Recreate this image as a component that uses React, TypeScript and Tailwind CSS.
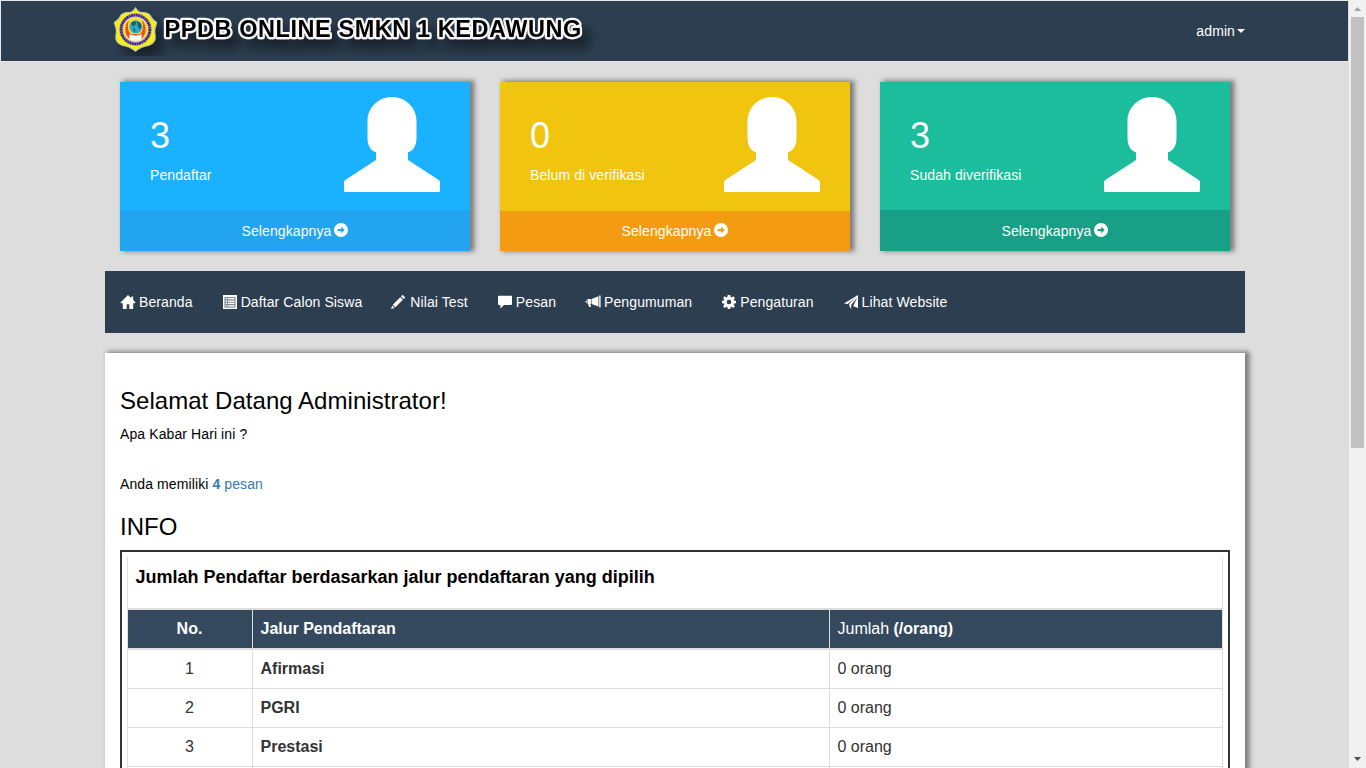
import type { ReactNode } from "react";

function Glyph({ children, className = "" }: { children: ReactNode; className?: string }) {
  return (
    <svg viewBox="0 0 14 14" className={"h-3.5 w-3.5 shrink-0 fill-current " + className}>
      {children}
    </svg>
  );
}

const HomeIcon = (
  <svg viewBox="0 0 16 14" className="-mx-px h-3.5 w-4 shrink-0 fill-current">
    <path d="M8 0 .5 7.4l.4.8h1.900V14h3.900V9.200h2.600V14h3.900V8.200h1.900l.4-.8-2.300-2.300V1.400h-2v1.800z" />
  </svg>
);
const ListIcon = (
  <Glyph>
    <path
      fillRule="evenodd"
      d="M0 0h14v14H0zM1.600 2v10.400h10.800V2zM2.600 3h1.500v1.300H2.600zM5 3h6.500v1.300H5zM2.600 5.400h1.500v1.300H2.600zM5 5.400h6.500v1.300H5zM2.600 7.800h1.500v1.300H2.600zM5 7.800h6.500v1.300H5zM2.600 10.200h1.500v1.300H2.600zM5 10.200h6.500v1.300H5z"
    />
    <path d="M1.600 2h10.800v10.400H1.600z" opacity=".4" />
  </Glyph>
);
const PencilIcon = (
  <Glyph className="-ml-px mr-px">
    <path d="M11.200.3c.3-.3.7-.3 1 0l1.600 1.600c.3.3.3.7 0 1L12.600 4 10 1.500zM9.300 2.200l2.600 2.600-7.500 7.400-2.600-2.500zM1.200 10.400l2.500 2.500L0 14z" />
  </Glyph>
);
const CommentIcon = (
  <Glyph>
    <path d="M.9.7h12.200c.5 0 .9.4.9.9v7.400c0 .5-.4.9-.9.9H6L2.400 13.500V9.900H.9c-.5 0-.9-.4-.9-.9V1.600C0 1.100.4.7.9.7z" />
  </Glyph>
);
const HornIcon = (
  <svg viewBox="0 0 16 14" className="-mx-px h-3.5 w-4 shrink-0 fill-current">
    <path d="M14.200.6h1.400v11.800h-1.400zM13.500 1.300v10.200L6.500 9V4zM2.500 4h3.400v4.800H5.200l.9 3.300H4.100L3 8.800h-.5zM.5 6.200 1.700 5v3.200L.5 7.300z" />
  </svg>
);
const CogIcon = (
  <Glyph>
    <path
      fillRule="evenodd"
      d="M5.700 0h2.600l.3 2 .9.4L11.200 1.200 12.900 2.900 11.700 4.600l.4.9 1.900.3v2.500l-1.900.3-.4.9 1.200 1.700-1.700 1.700-1.700-1.200-.9.4-.3 1.900H5.700l-.3-1.900-.9-.4-1.700 1.200-1.700-1.700 1.200-1.700-.4-.9L0 8.300V5.800l1.900-.3.4-.9L1.100 2.900l1.700-1.700 1.700 1.200.9-.4zM7 4.700a2.300 2.300 0 1 0 0 4.600 2.300 2.300 0 0 0 0-4.600z"
    />
  </Glyph>
);
const SendIcon = (
  <Glyph>
    <path d="M14 0v13L9.200 11.200 13 2.800 7.200 10v4L5.500 11.500 5.200 9 11.800 2.200 3.800 8.900 0 8.500z" />
  </Glyph>
);

function CircleArrow() {
  return (
    <Glyph className="-mt-0.5 -ml-px">
      <path
        fillRule="evenodd"
        d="M7 0a7 7 0 1 1 0 14A7 7 0 0 1 7 0zM7.200 3.800v2.100H3.600v2.200h3.600v2.100L10.800 7z"
      />
    </Glyph>
  );
}

function Person() {
  return (
    <svg viewBox="0 0 96 95" className="h-[95px] w-24 fill-white">
      <path d="M48 0C61.500 0 72.500 10.500 72.500 24v17c0 7-3 12.500-8.500 14.500v7.500L94 82.500q2 1.200 2 2.500v8.500q0 1.500-1.500 1.500h-93q-1.500 0-1.500-1.500V85q0-1.300 2-2.500L32 63v-7.500C26.500 53.500 23.500 48 23.500 41V24C23.500 10.500 34.500 0 48 0z" />
    </svg>
  );
}

const cards = [
  { value: 3, label: "Pendaftar", body: "bg-[#1ab2ff] h-32", foot: "bg-[#22a4f1]" },
  { value: 0, label: "Belum di verifikasi", body: "bg-[#f1c40f] h-[129px]", foot: "bg-[#f39c12]" },
  { value: 3, label: "Sudah diverifikasi", body: "bg-[#1cbd9d] h-32", foot: "bg-[#17a085]" },
];

const menu = [
  { label: "Beranda", icon: HomeIcon },
  { label: "Daftar Calon Siswa", icon: ListIcon },
  { label: "Nilai Test", icon: PencilIcon },
  { label: "Pesan", icon: CommentIcon },
  { label: "Pengumuman", icon: HornIcon },
  { label: "Pengaturan", icon: CogIcon },
  { label: "Lihat Website", icon: SendIcon },
];

const rows = ["Afirmasi", "PGRI", "Prestasi"];

const shield =
  "M30.500 7C32 9.500 34 11.500 37 11.500C41 11.500 44 12 45.500 15C46.500 18 48.500 19.500 51.500 21.500C51 25 49.500 27 49.500 30C49.500 33 51 36 49.500 39.500C47.500 43.500 44 44.500 40.500 45C36 45.500 34 47.500 30.500 50C27 47.500 25 45.500 20.500 45C17 44.500 13.500 43.500 11.500 39.500C10 36 11.500 33 11.500 30C11.500 27 10 25 9.500 21.500C12.500 19.500 14.500 18 15.500 15C17 12 20 11.500 24 11.500C27 11.500 29 9.500 30.500 7z";

function Brand() {
  return (
    <svg viewBox="0 0 500 60" className="h-[60px] w-[500px]">
      <defs>
        <filter id="soft" filterUnits="userSpaceOnUse" x="0" y="0" width="500" height="55">
          <feDropShadow dx="8" dy="10" stdDeviation="6" floodColor="#000" floodOpacity="0.45" />
        </filter>
      </defs>
      <g filter="url(#soft)">
        <path d={shield} fill="#f7f00c" stroke="#c9c9b6" strokeWidth="1.200" />
        <circle cx="30.500" cy="28.500" r="16" fill="#d9cfe0" stroke="#8d8440" strokeWidth=".5" />
        <circle cx="30.500" cy="28.500" r="14.300" fill="none" stroke="#44237c" strokeWidth="2.800" strokeDasharray="2 .4" />
        <circle cx="30.500" cy="28.500" r="12" fill="#f9e21f" />
        <path d="M24 19c-5 5-5 15 1 19h11c6-4 6-14 1-19 2 6 1 12-2 14h-9c-3-2-4-8-2-14z" fill="#ec4f22" />
        <circle cx="30.800" cy="25.800" r="6.500" fill="#35a5d3" />
        <path d="M26 22l3-1.800 2.500.8-1 2.500-2 2-1.500-1zM32 20.800l3.500 1.500 1 3-2 3.200-1.800-3.500zM28 27l2.200 1v3.200l-2-2z" fill="#16644f" />
        <path d="M24.500 33.500l6 1.200 6-1.200v5.500l-6 1-6-1z" fill="#fff" stroke="#d5c8c8" strokeWidth=".5" />
      </g>
      <text
        x="59.500"
        y="36.300"
        textLength="417"
        filter="url(#soft)"
        paintOrder="stroke"
        stroke="#f8f8f8"
        strokeWidth="4.400"
        strokeLinejoin="round"
        className="fill-black font-['Liberation_Sans',sans-serif] text-[23.500px] font-bold"
      >
        PPDB ONLINE SMKN 1 KEDAWUNG
      </text>
    </svg>
  );
}

function Scrollbar() {
  return (
    <div className="flex w-[17px] shrink-0 flex-col items-center justify-between bg-[#f1f1f1]">
      <div className="flex flex-col items-center">
        <svg viewBox="0 0 17 17" className="h-[17px] w-[17px] fill-[#a3a3a3]">
          <path d="M5 11h7L8.500 7z" />
        </svg>
        <div className="h-[431px] w-[13px] bg-[#c1c1c1]" />
      </div>
      <svg viewBox="0 0 17 17" className="h-[17px] w-[17px] fill-[#505050]">
        <path d="M5 6h7l-3.500 4z" />
      </svg>
    </div>
  );
}

export default function App() {
  return (
    <div className="flex h-screen overflow-hidden bg-[#dddddd] font-['Liberation_Sans',Arial,sans-serif] text-sm leading-5 tracking-[0.1px] text-black">
      <div className="min-w-0 flex-1">
        <header className="mr-px h-[62px] border-y border-l border-[#e7e7e7] bg-[#2c3e50]">
          <div className="ml-[104px] flex h-[60px] w-[1140px] items-center justify-between">
            <Brand />
            <a className="flex items-center text-white">
              admin
              <span className="ml-0.5 border-x-4 border-t-4 border-x-transparent border-t-white" />
            </a>
          </div>
        </header>

        <div className="ml-[105px] w-[1140px]">
          <section className="mt-5 flex gap-[30px] px-[15px]">
            {cards.map((c) => (
              <div key={c.label} className="flex h-[169px] w-[350px] flex-col text-white shadow-[3px_-1px_5px_1.5px_#7c7c7c]">
                <div className={"flex justify-between px-[30px] " + c.body}>
                  <div className="pt-[34px]">
                    <div className="text-[36px] leading-10">{c.value}</div>
                    <div className="mt-[9px]">{c.label}</div>
                  </div>
                  <div className="pt-[15px]">
                    <Person />
                  </div>
                </div>
                <a className={"flex flex-1 items-center justify-center gap-1 " + c.foot}>
                  <span>Selengkapnya</span>
                  <CircleArrow />
                </a>
              </div>
            ))}
          </section>

          <nav className="mt-5 flex h-[62px] items-center gap-[30px] bg-[#2c3e50] px-4 text-white">
            {menu.map((m) => (
              <a key={m.label} className="flex items-center gap-1">
                {m.icon}
                <span>{m.label}</span>
              </a>
            ))}
          </nav>

          <main className="mt-5 h-[900px] bg-white px-[15px] pt-[35px] shadow-[3px_-1px_5px_1.5px_#7c7c7c]">
            <h3 className="text-[24px] leading-[26px] tracking-[0.04px]">Selamat Datang Administrator!</h3>
            <p className="mt-2.5">Apa Kabar Hari ini ?</p>
            <p className="mt-[30px]">
              Anda memiliki{" "}
              <a className="text-[#337ab7]">
                <b>4</b> pesan
              </a>
            </p>
            <h3 className="mt-5 text-[24px] leading-[26px] tracking-normal">INFO</h3>
            <div className="mt-2.5 h-[600px] border-2 border-[#333333] p-[5px] tracking-normal">
              <div className="border-x border-[#dddddd] text-base leading-[22px] text-[#333333]">
                <div className="h-[51px] px-[7.5px] pt-[9px] text-lg leading-[22px] font-bold text-black">
                  Jumlah Pendaftar berdasarkan jalur pendaftaran yang dipilih
                </div>
                <div className="grid h-[42px] grid-cols-[125px_577px_1fr] border-y-2 border-[#dddddd] bg-[#34495e] leading-[37px] font-bold text-white">
                  <div className="border-r border-[#dddddd] pr-px text-center">No.</div>
                  <div className="border-r border-[#dddddd] pl-[7.5px]">Jalur Pendaftaran</div>
                  <div className="pl-[7.5px]">
                    <span className="font-normal">Jumlah</span> (/orang)
                  </div>
                </div>
                {rows.map((r, i) => (
                  <div key={r} className="grid h-[39px] grid-cols-[125px_577px_1fr] border-b border-[#dddddd] leading-[38px]">
                    <div className="border-r border-[#dddddd] pr-px text-center">{i + 1}</div>
                    <div className="border-r border-[#dddddd] pl-[7.5px] font-bold">{r}</div>
                    <div className="pl-[7.5px]">0 orang</div>
                  </div>
                ))}
                <div className="grid h-[39px] grid-cols-[125px_577px_1fr]">
                  <div className="border-r border-[#dddddd]" />
                  <div className="border-r border-[#dddddd]" />
                </div>
              </div>
            </div>
          </main>
        </div>
      </div>
      <Scrollbar />
    </div>
  );
}
